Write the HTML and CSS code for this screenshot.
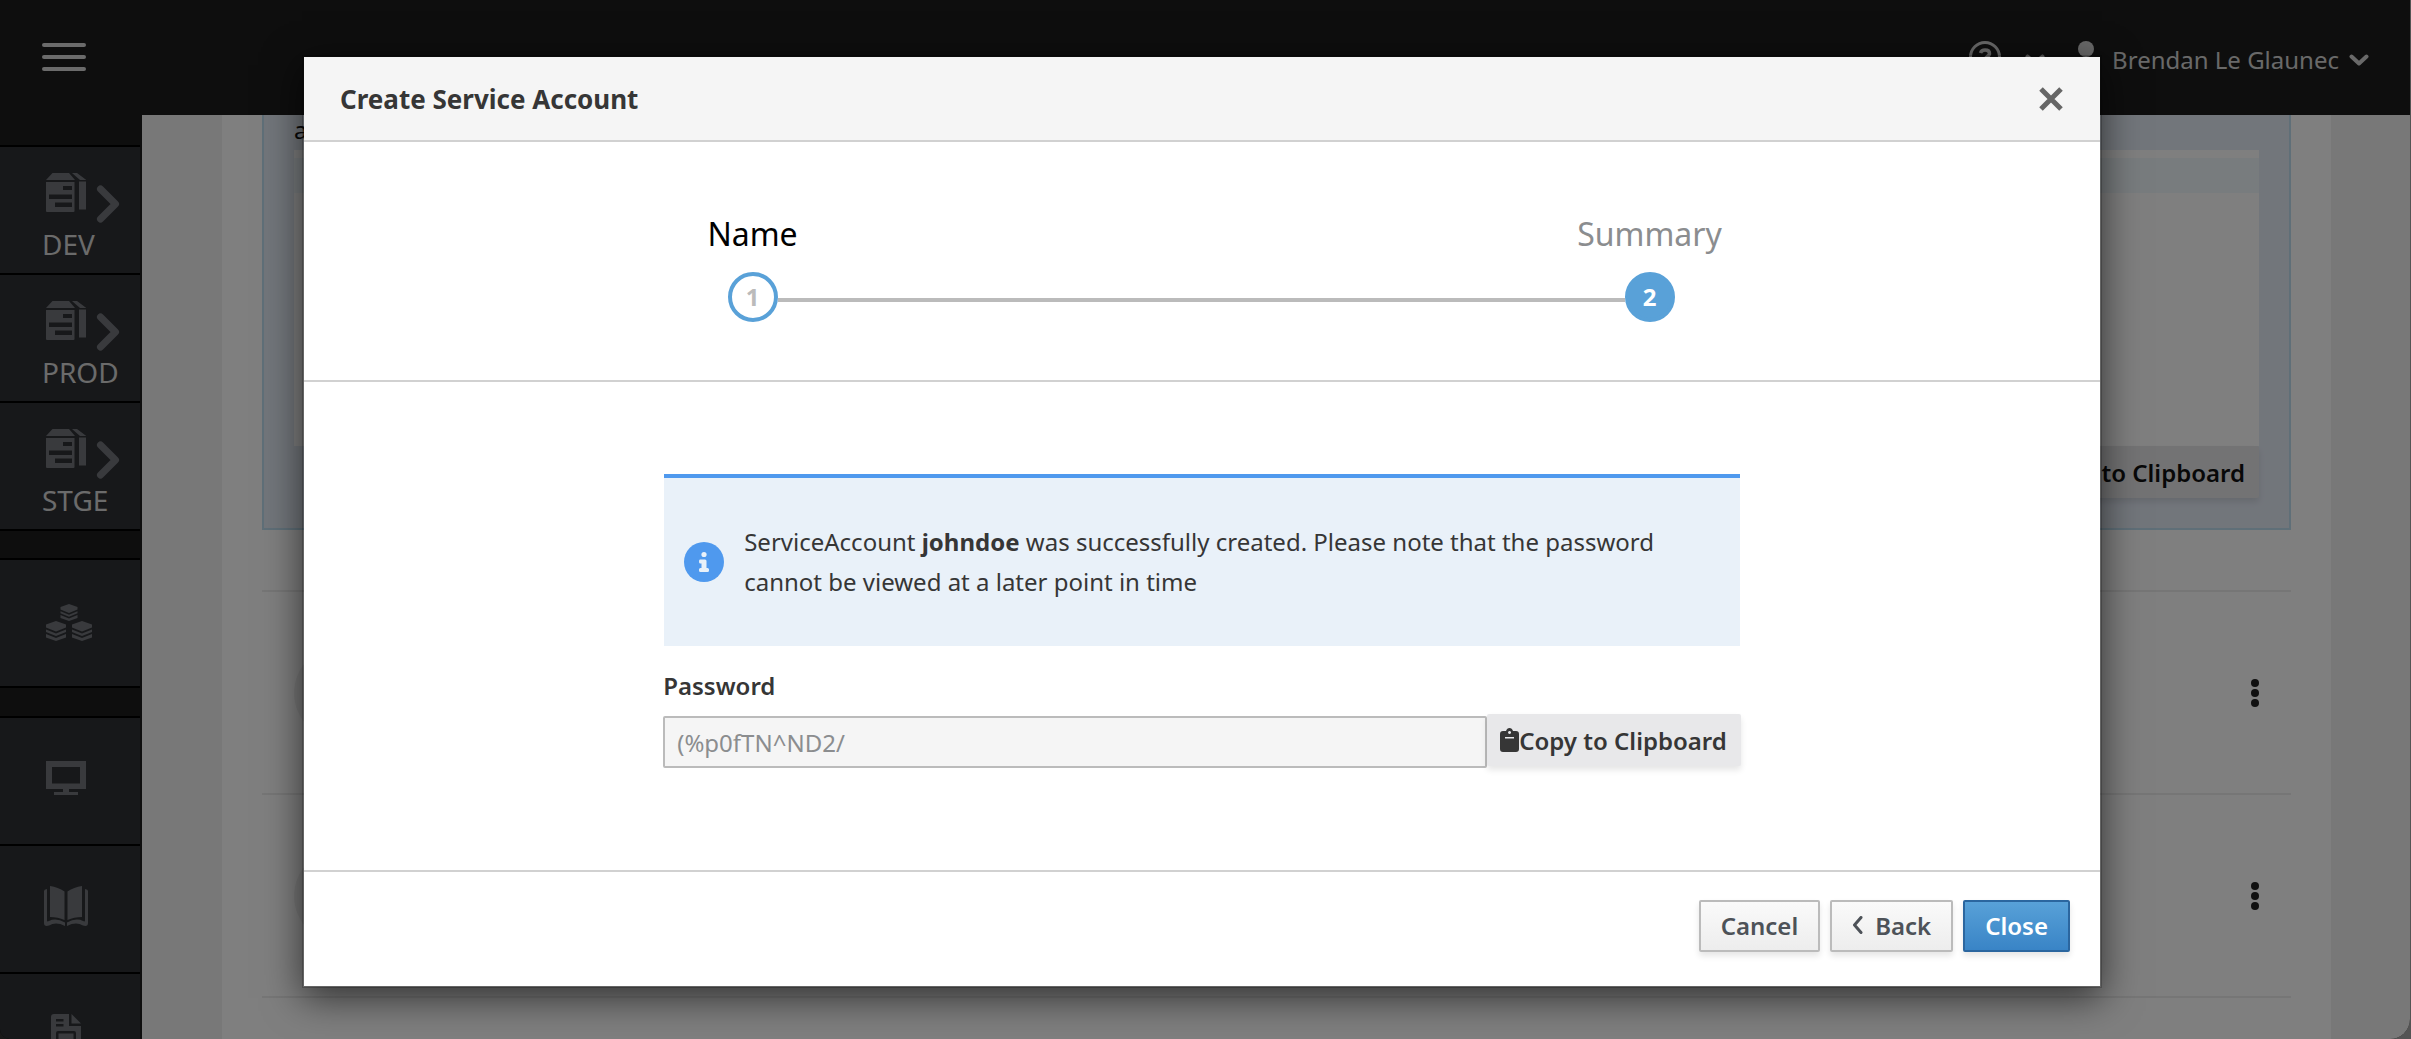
FILE: index.html
```html
<!DOCTYPE html>
<html lang="en">
<head>
<meta charset="utf-8">
<meta name="viewport" content="width=device-width, initial-scale=1">
<title>Create Service Account</title>
<link rel="stylesheet" href="styles.css">
</head>
<body>
<svg class="sprite" aria-hidden="true">
  <symbol id="i-env" viewBox="0 0 40 40">
    <path fill-rule="evenodd" d="M0 9h28.500v29q0 1-1 1h-26.500q-1 0-1-1zM17 13h9v4h-9zM3 21.500h23v4.500h-23zM9 29.500h17v4.500h-17zM6.500 0h16.500l6 7h-29zM26 0h5l9.500 7h-6.500zM33 8.500h7v28h-7z"/>
  </symbol>
  <symbol id="i-angle" viewBox="0 0 24 38">
    <path fill="none" stroke="currentColor" stroke-width="7" stroke-linecap="round" stroke-linejoin="round" d="M4.500 4l15 15-15 15"/>
  </symbol>
  <symbol id="i-chevron" viewBox="0 0 20 12">
    <path fill="none" stroke="currentColor" stroke-width="4" stroke-linecap="round" stroke-linejoin="round" d="M2.500 2.500l7.500 7 7.500-7"/>
  </symbol>
  <symbol id="i-cube" viewBox="0 0 20 20">
    <path d="M0 3.500L10 0l10 3.500v3l-10 4-10-4zM0 8.500l10 4 10-4v2.500l-10 4-10-4zM0 13l10 4 10-4v3.500l-10 3.500-10-3.500z"/>
  </symbol>
  <symbol id="i-kebab" viewBox="0 0 8 28">
    <circle cx="4" cy="4" r="4"/><circle cx="4" cy="14" r="4"/><circle cx="4" cy="24" r="4"/>
  </symbol>
</svg>

<div class="app">
  <header class="masthead">
    <button class="menu" aria-label="Toggle navigation"><span></span><span></span><span></span></button>
    <div class="tools">
      <button class="tool" aria-label="Help">
        <svg width="32" height="32" viewBox="0 0 32 32"><circle cx="16" cy="16" r="14.500" fill="none" stroke="currentColor" stroke-width="3"/><path d="M11.500 12q1-3 4.500-3 4.500 0 4.500 3.500 0 2-2.500 3.200-1.800 1-1.800 3" fill="none" stroke="currentColor" stroke-width="3.500"/><circle cx="16" cy="23" r="2"/></svg>
        <svg width="20" height="12"><use href="#i-chevron"/></svg>
      </button>
      <button class="tool user">
        <svg width="32" height="32" viewBox="0 0 32 32"><circle cx="16" cy="8" r="8"/><path d="M2 32V25q0-7 7-7h14q7 0 7 7v7z"/></svg>
        <span>Brendan Le Glaunec</span>
        <svg width="20" height="12"><use href="#i-chevron"/></svg>
      </button>
    </div>
  </header>

  <div class="workspace">
    <nav class="sidebar">
      <div class="group">
        <a class="item" href="#dev"><span class="glyphs"><svg width="40" height="40"><use href="#i-env"/></svg><svg class="angle" width="24" height="38"><use href="#i-angle"/></svg></span><span>DEV</span></a>
        <a class="item" href="#prod"><span class="glyphs"><svg width="40" height="40"><use href="#i-env"/></svg><svg class="angle" width="24" height="38"><use href="#i-angle"/></svg></span><span>PROD</span></a>
        <a class="item" href="#stge"><span class="glyphs"><svg width="40" height="40"><use href="#i-env"/></svg><svg class="angle" width="24" height="38"><use href="#i-angle"/></svg></span><span>STGE</span></a>
      </div>
      <div class="group">
        <a class="item icon-only" href="#cluster" aria-label="Cluster">
          <svg width="46" height="40" viewBox="0 -2 46 40"><use href="#i-cube" x="14" y="0" width="18" height="17"/><use href="#i-cube" x="0" y="17" width="20" height="20"/><use href="#i-cube" x="26" y="17" width="20" height="20"/></svg>
        </a>
      </div>
      <div class="group">
        <a class="item icon-only" href="#monitoring" aria-label="Monitoring">
          <svg width="40" height="36" viewBox="0 0 40 36"><path fill-rule="evenodd" d="M0 1h40v28H23v3h9v3H8v-3h9v-3H0zM6 7v16.500h28V7z"/></svg>
        </a>
        <a class="item icon-only" href="#docs" aria-label="Documentation">
          <svg class="book" width="44" height="40" viewBox="0 0 44 40"><path d="M6 0q8 1 14.500 5.500V34Q14 31 6 31zM38 0q-8 1-14.500 5.500V34Q30 31 38 31zM3 3v31.500q0 1.500 2 .5 7-3.500 16 1.500V40Q12 35.500 5 39.500 0 41 0 37V5q0-1.500 3-2zM41 3v31.500q0 1.500-2 .5-7-3.500-16 1.500V40q9-4.500 16-.5 5 1.500 5-2.500V5q0-1.500-3-2z"/></svg>
        </a>
        <a class="item icon-only" href="#logs" aria-label="Logs">
          <svg class="file" width="30" height="40" viewBox="0 0 30 40"><path fill-rule="evenodd" d="M3 0h15v12h12v25q0 3-3 3H3q-3 0-3-3V3q0-3 3-3zM20.500 0L30 9.500h-9.500zM5 5v2.500h7.500V5zM5 10v2.500h7.500V10zM7 17q-2 0-2 2v10q0 2 2 2h16q2 0 2-2V19q0-2-2-2zM7.500 19.500h15v9h-15z"/></svg>
        </a>
      </div>
    </nav>

    <main class="content">
      <section class="token">
        <p>a</p>
        <div class="token-value"></div>
        <button class="copy">Copy to Clipboard</button>
      </section>
      <ul class="accounts">
        <li><span class="avatar"></span><button class="kebab" aria-label="Actions"><svg width="8" height="28"><use href="#i-kebab"/></svg></button></li>
        <li><span class="avatar"></span><button class="kebab" aria-label="Actions"><svg width="8" height="28"><use href="#i-kebab"/></svg></button></li>
        <li></li>
      </ul>
    </main>
  </div>
</div>

<div class="backdrop">
  <div class="modal" role="dialog" aria-labelledby="modal-title">
    <div class="modal-header">
      <h1 id="modal-title">Create Service Account</h1>
      <button class="dismiss" aria-label="Dismiss"><svg width="26" height="26" viewBox="0 0 26 26"><path d="M3 3l20 20m0-20l-20 20" fill="none" stroke="currentColor" stroke-width="5"/></svg></button>
    </div>
    <ol class="steps">
      <li class="done"><span>Name</span><b>1</b></li>
      <li class="active"><span>Summary</span><b>2</b></li>
    </ol>
    <div class="modal-body">
      <div class="alert">
        <svg width="40" height="40" viewBox="0 0 40 40"><circle cx="20" cy="20" r="20" fill="#4f99ee"/><g fill="#e9f1f9"><circle cx="20" cy="12.500" r="2.600"/><path d="M16 17.500h5q1.500 0 1.500 1.500v7h1q1.500 0 1.500 1.500v1q0 1.500-1.500 1.500h-7q-1.500 0-1.500-1.500v-1q0-1.500 1.500-1.500h1V21.500H16q-1-.2-1-2t1-2z"/></g></svg>
        <p>ServiceAccount <strong>johndoe</strong> was successfully created. Please note that the password cannot be viewed at a later point in time</p>
      </div>
      <label for="password">Password</label>
      <div class="field">
        <input id="password" type="text" value="(%p0fTN^ND2/" readonly>
        <button class="copy"><svg width="19" height="24" viewBox="0 0 19 24"><path fill-rule="evenodd" d="M3 3h3q1-3 3.500-3T13 3h3q3 0 3 3v15q0 3-3 3H3q-3 0-3-3V6q0-3 3-3zM9.500 3a1.500 1.500 0 1 0 .1 0zM5 9v1.500h9V9z"/></svg>Copy to Clipboard</button>
      </div>
    </div>
    <div class="modal-footer">
      <button class="btn">Cancel</button>
      <button class="btn"><svg width="11" height="18" viewBox="0 0 11 18"><path d="M9 1.500L2.500 9 9 16.500" fill="none" stroke="currentColor" stroke-width="3" stroke-linecap="round" stroke-linejoin="round"/></svg>Back</button>
      <button class="btn primary">Close</button>
    </div>
  </div>
</div>
</body>
</html>
```
FILE: styles.css
```css
* { box-sizing: border-box; }

html { background: linear-gradient(90deg, #333 50%, #a8a8a8 50%); }

body {
  margin: 0;
  height: 100vh;
  overflow: hidden;
  font: 24px/33px "Noto Sans", "Open Sans", sans-serif;
  color: #363636;
}

h1, p, ol, ul { margin: 0; padding: 0; }
ol, ul { list-style: none; }
svg { display: block; fill: currentColor; flex: none; }
.sprite { position: absolute; width: 0; height: 0; }

button {
  margin: 0;
  padding: 0;
  border: 0;
  background: none;
  font: inherit;
  color: inherit;
}

.app {
  display: flex;
  flex-direction: column;
  height: 100vh;
  margin-right: 1px;
  overflow: hidden;
  border-radius: 0 0 20px 10px;
  background: #1c1c1c;
}

/* Masthead */
.masthead {
  display: flex;
  flex: none;
  justify-content: space-between;
  height: 115px;
  padding: 41px 41px 0 42px;
  color: #d2d2d2;
}
.menu {
  display: flex;
  flex-direction: column;
  gap: 8px;
  width: 44px;
  height: 32px;
  padding: 2px 0;
}
.menu span { height: 4px; border-radius: 2px; background: #d6d6d6; }
.tools { display: flex; gap: 25px; height: 38px; }
.tool { display: flex; align-items: flex-start; gap: 24px; }
.tool svg[height="12"] { margin-top: 13px; }
.user { gap: 10px; }
.user span { margin-top: 2px; }

.workspace { display: flex; flex: 1; min-height: 0; }

/* Sidebar */
.sidebar {
  flex: none;
  width: 142px;
  padding: 30px 2px 0 0;
  overflow: hidden;
  background: #1c1c1c;
}
.group { margin-bottom: 28px; border-bottom: 2px solid #000; }
.group:first-child { margin-bottom: 27px; }
.item {
  display: flex;
  flex-direction: column;
  gap: 2px;
  height: 128px;
  padding: 26px 0 0 42px;
  border-top: 2px solid #000;
  background: #2f3135;
  color: #d6d6d6;
  font-size: 28px;
  line-height: 38px;
  text-decoration: none;
}
.glyphs { display: flex; gap: 10px; padding-left: 4px; color: #72757b; }
.angle { margin-top: 12px; }
.icon-only { padding: 42px 0 0 46px; color: #72757b; }
.book { margin-left: -2px; margin-top: -2px; }
.file { margin-left: 5px; margin-top: -2px; }

/* Page content */
.content {
  flex: 1;
  margin: 0 79px 0 0;
  padding: 0 40px;
  border-left: 80px solid #f1f1f1;
  background: #fff;
  box-shadow: 79px 0 #f1f1f1;
}
.token {
  display: flex;
  flex-direction: column;
  height: 415px;
  padding: 0 30px;
  border: solid #bfdff0;
  border-width: 0 2px 2px;
  background: #e5ecf7;
  color: #111;
}
.token p { line-height: 29px; }
.token-value {
  height: 296px;
  margin-top: 6px;
  background: linear-gradient(#f1f8fc, #f1f8fc) 0 8px / 100% 35px no-repeat #fff;
}
.token .copy { align-self: flex-end; background: #e6e6e8; }
.accounts { margin-top: 60px; }
.accounts li {
  display: flex;
  align-items: center;
  justify-content: space-between;
  height: 203px;
  padding: 0 32px;
  border-top: 2px solid #ededed;
}
.avatar { width: 94px; height: 94px; border-radius: 50%; background: #f1f1f1; }
.kebab { color: #222; }

/* Modal */
.backdrop {
  position: absolute;
  inset: 0;
  display: flex;
  align-items: flex-start;
  justify-content: center;
  padding: 55px 7px 0 0;
  background: rgba(0, 0, 0, .5);
}
.modal {
  width: 1800px;
  max-width: 96%;
  border: 2px solid rgba(0, 0, 0, .2);
  background: #fff;
  background-clip: padding-box;
  box-shadow: 0 10px 36px rgba(0, 0, 0, .6);
}
.modal-header {
  display: flex;
  align-items: center;
  justify-content: space-between;
  height: 85px;
  padding: 0 36px;
  border-bottom: 2px solid #d1d1d1;
  background: #f5f5f5;
}
h1 { font-size: 26px; line-height: 36px; font-weight: 700; }
.dismiss { color: #666; }

.steps { display: flex; height: 240px; padding: 70px 2px 0 0; border-bottom: 2px solid #d1d1d1; }
.steps li {
  position: relative;
  display: flex;
  flex: 1;
  flex-direction: column;
  align-items: center;
  gap: 16px;
  font-size: 32px;
  line-height: 44px;
  color: #000;
}
.steps .active { color: #8b8d8f; }
.steps .done::after {
  content: "";
  position: absolute;
  top: 86px;
  left: calc(50% + 25px);
  right: calc(25px - 50%);
  height: 4px;
  background: #bbb;
}
.steps b {
  width: 50px;
  height: 50px;
  border: 4px solid #59a1d8;
  border-radius: 50%;
  color: #bbb;
  font-size: 24px;
  line-height: 42px;
  text-align: center;
}
.steps .active b { background: #59a1d8; color: #fff; }

.modal-body { padding: 92px 20% 102px; }
.alert {
  display: flex;
  align-items: center;
  gap: 20px;
  height: 172px;
  margin: 0 1px 23px;
  padding: 0 60px 0 20px;
  border-top: 4px solid #4f99ee;
  background: #e9f1f9;
  line-height: 40px;
}
label { display: block; font-weight: 600; }
.field { display: flex; margin-top: 12px; }
input {
  flex: 1;
  min-width: 0;
  height: 52px;
  margin-top: 2px;
  padding: 0 12px;
  border: 2px solid #bbb;
  border-radius: 2px;
  outline: 0;
  background: #f5f5f5;
  color: #8b8d8f;
  font: inherit;
}
.copy {
  display: flex;
  align-items: center;
  height: 52px;
  padding: 0 14px 0 13px;
  border-radius: 2px;
  background: #e8e8ea;
  box-shadow: 0 4px 6px rgba(3, 3, 3, .1);
  font-weight: 600;
}

.modal-footer {
  display: flex;
  justify-content: flex-end;
  gap: 10px;
  padding: 28px 30px 34px;
  border-top: 2px solid #d1d1d1;
}
.btn {
  display: flex;
  align-items: center;
  gap: 12px;
  height: 52px;
  padding: 0 20px 2px;
  border: 2px solid #bbb;
  border-radius: 2px;
  background: linear-gradient(#fafafa, #ededed);
  box-shadow: 0 4px 6px rgba(3, 3, 3, .1);
  color: #4d5258;
  font-weight: 600;
}
.primary {
  border-color: #2b669f;
  background: linear-gradient(#58a1d8, #3984c6);
  color: #fff;
}
```
